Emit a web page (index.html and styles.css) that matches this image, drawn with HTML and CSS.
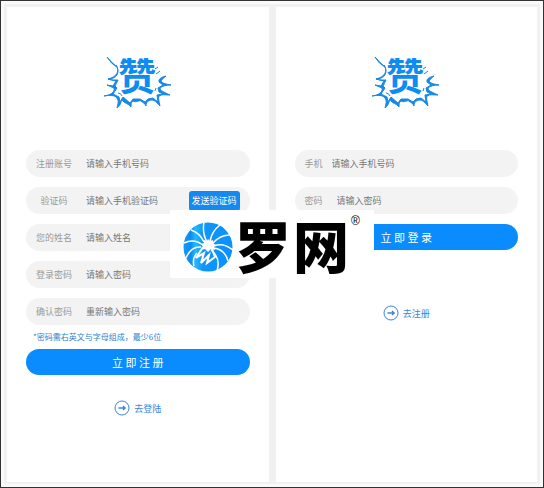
FILE: index.html
```html
<!DOCTYPE html>
<html lang="zh-CN">
<head>
<meta charset="utf-8">
<meta name="viewport" content="width=device-width, initial-scale=1">
<title>立即注册</title>
<link rel="stylesheet" href="styles.css">
</head>
<body>
<svg class="defs" width="0" height="0">
  <defs>
    <symbol id="burst" viewBox="0 0 72 60">
      <g fill="#1689e6" stroke="#1689e6" stroke-width="1" stroke-linejoin="round">
        <path d="M5 7 Q10 13 15 17 Q9 14 5 7Z"/>
        <path d="M14 15 C18 21 15 27 6 29 C14 29 19 23 14 15Z"/>
        <path d="M6 29 L14 31 L11 36 L5 35 L12 38 C13 42 9 45 2 46 C8 45 13 45 15 48 C17 51 16 54 15 58 C19 55 19 51 20 50 C23 54 26 53 29 57 C29 54 29 52 31 51 C34 53 37 50 39 51 C41 53 43 53 44 56 C44 53 45 51 49 50 C53 50 54 52 58 56 C57 51 56 48 57 46 C60 44 63 45 68 45 C62 42 58 41 58 38 C60 36 64 35 69 35 C63 34 60 33 59 31 C60 29 62 28 64 26 C60 27 58 28 57 30 L57 32 L61 35 L56 38 L57 42 L61 44 L55 45 L56 52 L51 48 L46 49 L43 52 L38 49 L31 49 L28 53 L21 47 L18 52 L17 47 L11 44 L15 38 L13 36 L16 30 L10 30Z"/>
        <path fill="none" d="M16 43 Q19 43 20 46 M54 38 L53 41 M53 19 L56 17 M54 24 L58 21"/>
      </g>
      <text class="burst-text" x="35" y="40" text-anchor="middle">赞</text>
    </symbol>
    <symbol id="arrow" viewBox="0 0 16 16">
      <g fill="none" stroke="#3a86d8">
        <circle cx="8" cy="8" r="7"/>
        <path stroke-width="1.3" d="M4.5 8 H11 M9 6 L11.2 8 L9 10"/>
      </g>
    </symbol>
  </defs>
</svg>
<main class="board">
  <form class="panel" id="register">
    <svg class="logo"><use href="#burst"/></svg>
    <div class="field"><label for="account">注册账号</label><input id="account" type="text" placeholder="请输入手机号码"></div>
    <div class="field"><label for="code">验证码</label><input id="code" type="text" placeholder="请输入手机验证码"><button class="send" type="button">发送验证码</button></div>
    <div class="field"><label for="name">您的姓名</label><input id="name" type="text" placeholder="请输入姓名"></div>
    <div class="field"><label for="pass">登录密码</label><input id="pass" type="password" placeholder="请输入密码"></div>
    <div class="field"><label for="again">确认密码</label><input id="again" type="password" placeholder="重新输入密码"></div>
    <p class="note">*密码需右英文与字母组成，最少6位</p>
    <button class="submit" type="submit">立 即 注 册</button>
    <a class="switch" href="#login"><svg width="16" height="16"><use href="#arrow"/></svg>去登陆</a>
  </form>
  <form class="panel login" id="login">
    <svg class="logo"><use href="#burst"/></svg>
    <div class="field"><label for="phone">手机</label><input id="phone" type="text" placeholder="请输入手机号码"></div>
    <div class="field wide"><label for="secret">密码</label><input id="secret" type="password" placeholder="请输入密码"></div>
    <button class="submit" type="submit">立 即 登 录</button>
    <a class="switch" href="#register"><svg width="16" height="16"><use href="#arrow"/></svg>去注册</a>
  </form>
  <div class="brand">
    <svg width="50" height="50" viewBox="0 0 50 50">
      <defs><linearGradient id="blue"><stop offset="0" stop-color="#149af5"/><stop offset=".15" stop-color="#0b8cf5"/><stop offset=".24" stop-color="#25b8fa"/><stop offset=".4" stop-color="#0f96fa"/><stop offset="1" stop-color="#0b90ff"/></linearGradient></defs>
      <circle cx="25" cy="25" r="24.5" fill="url(#blue)"/>
      <g fill="none" stroke="#fff" stroke-width="1.5">
        <path d="M24 20 Q19 11 21 0"/>
        <path d="M27 19 Q29 9 37 3"/>
        <path d="M30 21 Q37 13 47 13"/>
        <path d="M31 24 Q40 20 50 28"/>
        <path d="M30 26 Q42 27 45 39"/>
        <path d="M28 28 Q38 36 34 49"/>
        <path d="M21 20 Q17 11 8 8"/>
        <path d="M20 23 Q11 16 1 21"/>
        <path d="M18 25 Q8 24 3 36"/>
        <path d="M14 31 Q9 36 11 44"/>
        <path stroke-width="2" d="M20 25 L13 36 L21 31 L18 41 L26 33 L24 41 L32 35 L29 27"/>
      </g>
      <path fill="#fff" d="M25 17 L27 19 L30 18 L30 21 L33 23 L31 25 L32 28 L28 27 L25 30 L22 27 L18 28 L20 25 L18 22 L21 21 L21 18 L24 19Z"/>
    </svg>
    <span class="brand-name"><span>罗</span><span>网</span></span><sup>®</sup>
  </div>
</main>
</body>
</html>
```

FILE: styles.css
```css
* { box-sizing: border-box; }

body {
  margin: 0;
  font-family: "Noto Sans CJK SC", sans-serif;
  font-size: 9px;
  color: #999;
}

input, button { font: inherit; border: 0; padding: 0; }

.defs { position: absolute; }

.board {
  position: relative;
  display: flex;
  gap: 7px;
  min-height: 100vh;
  padding: 6px 6px 5px;
  border: 1px solid #333;
  background: #f1f1f1;
  box-shadow: inset 0 0 0 3px #fafafa;
}

.panel {
  flex: 1;
  display: flex;
  flex-direction: column;
  gap: 10px;
  padding: 43px 19px 20px;
  background: #fff;
}

.logo {
  align-self: center;
  width: 72px;
  height: 60px;
  margin-bottom: 30px;
}

.burst-text {
  font-size: 38px;
  font-weight: 700;
  fill: #0d8cf2;
}

.field {
  display: flex;
  align-items: center;
  height: 27px;
  padding: 0 10px;
  border-radius: 14px;
  background: #f3f3f3;
}

.field label {
  width: 36px;
  margin-right: 14px;
  text-align: center;
  white-space: nowrap;
}

.field input {
  flex: 1;
  min-width: 0;
  height: 20px;
  background: transparent;
  color: #777;
  outline: 0;
}

.field input::placeholder { color: #777; opacity: 1; }

.send {
  width: 51px;
  height: 20px;
  border-radius: 3px;
  background: #1689f0;
  color: #fff;
  white-space: nowrap;
}

.note {
  margin: -4px 0 -4px 7px;
  font-size: 8px;
  line-height: 12px;
  color: #2b7fd0;
}

.submit {
  height: 26px;
  border-radius: 13px;
  background: #0a8cff;
  color: #fff;
  font-size: 11px;
}

.switch {
  display: flex;
  align-items: center;
  align-self: center;
  gap: 4px;
  margin-top: 15px;
  color: #3a86d8;
  text-decoration: none;
}

.login .field label { width: 18px; margin-right: 9px; }
.login .wide label { margin-right: 14px; }
.login .switch { margin-top: 45px; }

.brand {
  position: absolute;
  top: 209px;
  left: 50%;
  transform: translateX(-50%);
  display: flex;
  align-items: center;
  gap: 2px;
  width: 204px;
  height: 68px;
  padding-left: 13px;
  background: #fff;
  color: #000;
}

.brand svg { flex: none; margin-top: 6px; }

.brand-name {
  display: flex;
  gap: 2px;
  font-size: 56px;
  font-weight: 900;
  line-height: 50px;
}

.brand sup {
  align-self: flex-start;
  font-family: "Liberation Sans", sans-serif;
  font-size: 12px;
  line-height: 22px;
}
```
